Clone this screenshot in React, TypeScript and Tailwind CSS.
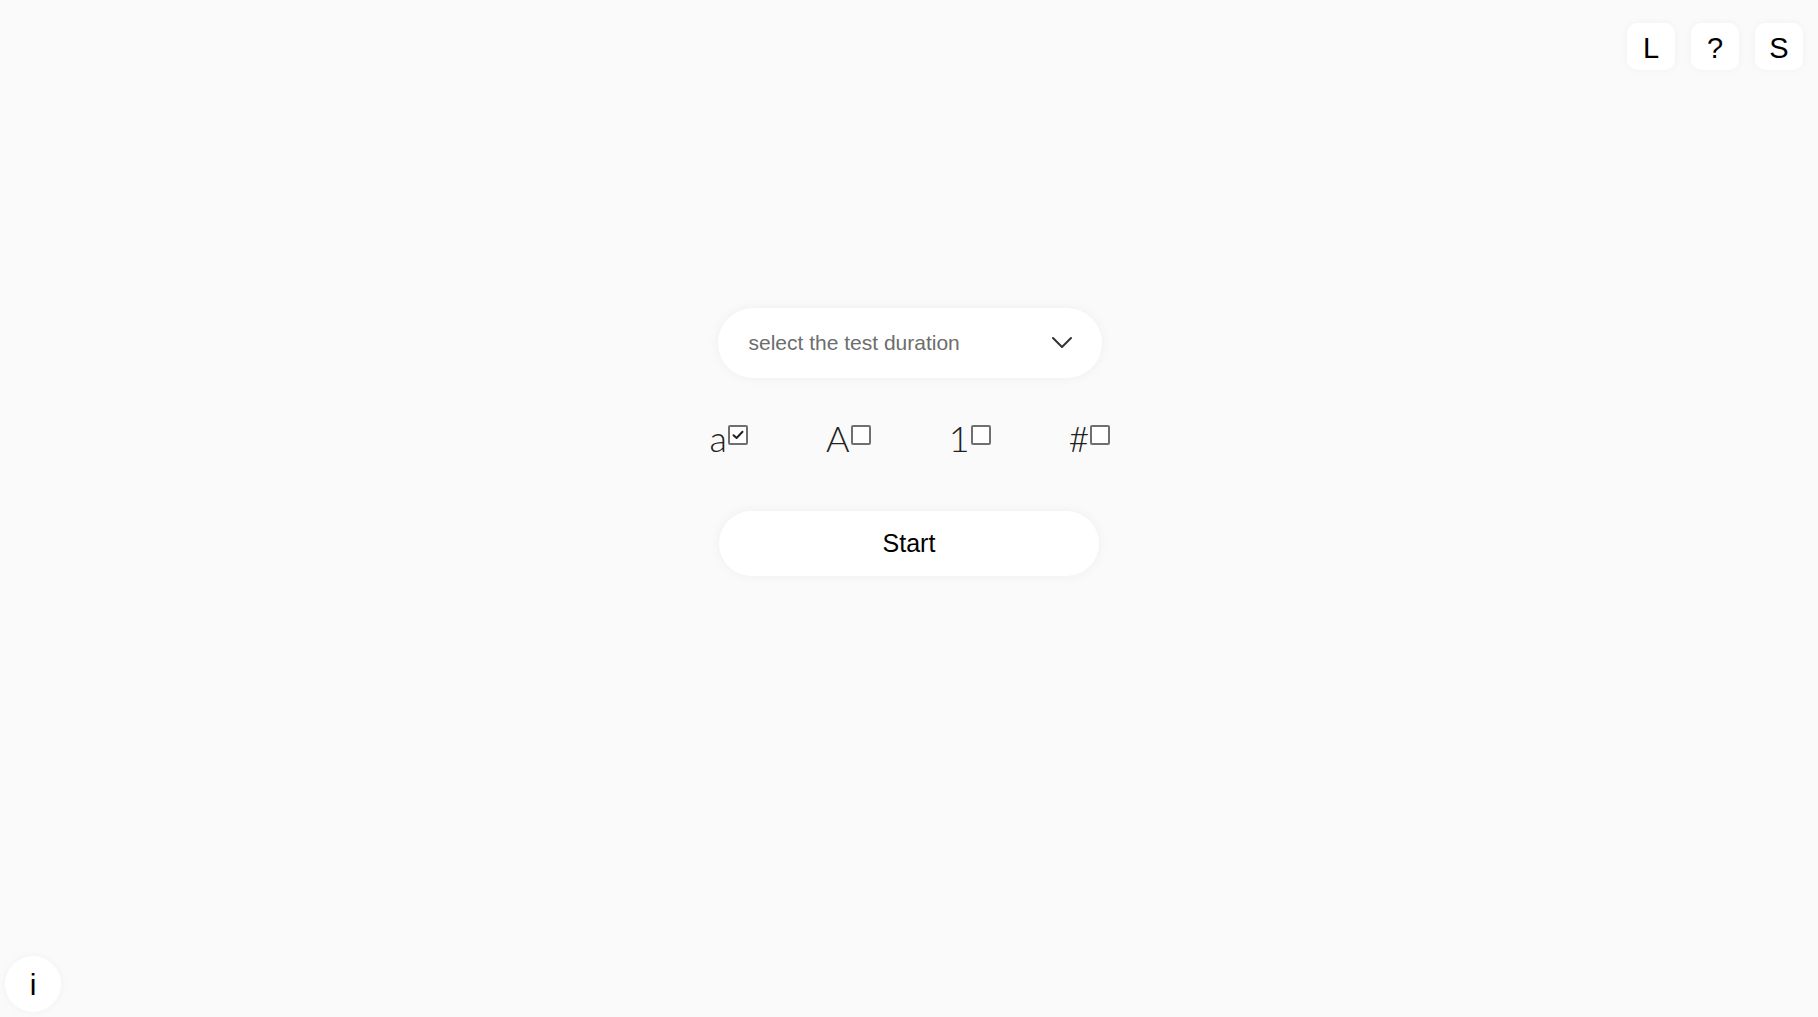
import React from "react";

function Box({ checked }: { checked?: boolean }) {
  return (
    <span className="ml-[1px] mt-[8px] flex h-[20px] w-[20px] shrink-0 items-center justify-center border-2 border-[#6f6f6f] bg-white rounded-[2px]">
      {checked && (
        <svg width="14" height="14" viewBox="0 0 14 14" fill="none">
          <path d="M2.5 7.2 L5.6 10 L11.5 3.8" stroke="#222" strokeWidth="2" strokeLinecap="round" strokeLinejoin="round" />
        </svg>
      )}
    </span>
  );
}

export default function App() {
  const opts: { label: string; checked: boolean }[] = [
    { label: "a", checked: true },
    { label: "A", checked: false },
    { label: "1", checked: false },
    { label: "#", checked: false },
  ];
  return (
    <div className="relative min-h-[1017px] w-full bg-[#fafafa] font-['Liberation_Sans',Arial,sans-serif] text-black">
      <div className="flex justify-end gap-[16px] pt-[23px] pr-[15px]">
        {["L", "?", "S"].map((t) => (
          <button
            key={t}
            className="flex h-[47px] w-[48px] items-center justify-center rounded-[10px] bg-white pt-[3px] text-[29px] leading-none shadow-[0_0_8px_rgba(0,0,0,0.04)]"
          >
            {t}
          </button>
        ))}
      </div>

      <div className="mt-[238px] flex flex-col items-center">
        <div className="ml-[1px] flex h-[70px] w-[384px] items-center justify-between rounded-full bg-white pl-[31px] pr-[29px] shadow-[0_0_12px_rgba(0,0,0,0.05)]">
          <span className="text-[21px] text-[#6d6d6d]">select the test duration</span>
          <svg width="22" height="14" viewBox="0 0 22 14" fill="none">
            <path d="M2 2 L11 11 L20 2" stroke="#333" strokeWidth="2" strokeLinecap="round" strokeLinejoin="round" />
          </svg>
        </div>

        <div className="mt-[39px] ml-[2px] flex items-center gap-[78px] font-['Lato',sans-serif] font-light text-[36px] leading-[42px] text-[#222]">
          {opts.map((o) => (
            <label key={o.label} className="flex items-start">
              <span>{o.label}</span>
              <Box checked={o.checked} />
            </label>
          ))}
        </div>

        <button className="mt-[52px] flex h-[65px] w-[380px] items-center justify-center rounded-full bg-white text-[25px] shadow-[0_0_12px_rgba(0,0,0,0.05)]">
          Start
        </button>
      </div>

      <button className="absolute bottom-[5px] left-[5px] flex h-[56px] w-[56px] items-center justify-center rounded-full bg-white text-[30px] shadow-[0_0_8px_rgba(0,0,0,0.04)]">
        i
      </button>
    </div>
  );
}
